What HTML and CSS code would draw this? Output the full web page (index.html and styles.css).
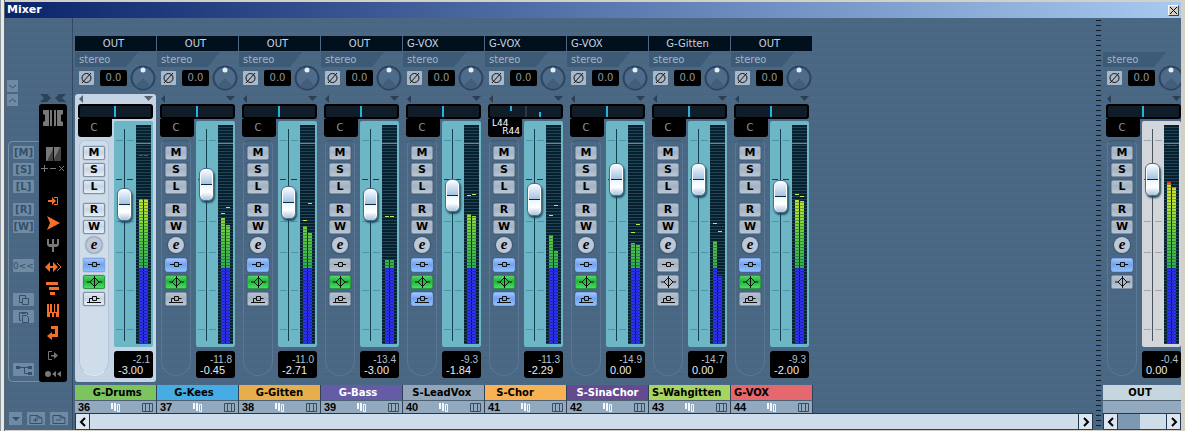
FILE: index.html
```html
<!DOCTYPE html>
<html lang="en">
<head>
<meta charset="utf-8">
<title>Mixer</title>
<link rel="stylesheet" href="styles.css">
</head>
<body>
<svg class="defs" aria-hidden="true">
  <symbol id="phase" viewBox="0 0 15 14"><circle cx="7.500" cy="7" r="4.500"/><path d="M3 12 12 2"/></symbol>
  <symbol id="insert" viewBox="0 0 20 12"><path d="M4 5.500H8M12 5.500H16"/><path d="M8.500 3.500H12.500V7.500H8.500Z"/></symbol>
  <symbol id="eq" viewBox="0 0 20 12"><path d="M3 6H6M15 6H18M10.500 0V12M10.500 1.500 15 6 10.500 10.500 6 6Z"/></symbol>
  <symbol id="send" viewBox="0 0 20 12"><path d="M3 9.500H17M5.500 9.500V5.500H8.500M12.500 5.500H15.500"/><path d="M8.500 3.500H12.500V7.500H8.500Z"/></symbol>
  <symbol id="prev" viewBox="0 0 8 10"><path d="M6 1 2 5 6 9"/></symbol>
  <symbol id="next" viewBox="0 0 8 10"><path d="M2 1 6 5 2 9"/></symbol>
</svg>

<div class="window">
  <header class="titlebar">
    <h1>Mixer</h1>
    <button class="close" aria-label="Close"><svg width="7" height="7" viewBox="0 0 7 7"><path d="M0 0 7 7M7 0 0 7"/></svg></button>
  </header>

  <main class="desk">
    <aside class="panel">
      <div class="panel-top">
        <div class="folds">
          <button aria-label="Fold down"><svg width="9" height="7" viewBox="0 0 9 7"><path d="M1 2 4.500 5 8 2"/></svg></button>
          <button aria-label="Fold up"><svg width="9" height="7" viewBox="0 0 9 7"><path d="M1 5 4.500 2 8 5"/></svg></button>
        </div>
        <svg class="narrow" width="26" height="8" viewBox="0 0 26 8"><path d="M0 0H7L11 4 7 8H0L4 4ZM26 0H19L15 4 19 8H26L22 4Z"/></svg>
      </div>
      <div class="panel-body">
        <div class="globals">
          <button>[M]</button><button>[S]</button><button>[L]</button>
          <button class="gap-before">[R]</button><button>[W]</button>
          <button class="reset">0&lt;&lt;</button>
          <button class="copy" aria-label="Copy"><svg width="14" height="12" viewBox="0 0 14 12"><path d="M5 8.500H2.500V1.500H8.500V4M5.500 4.500H11.500V10.500H5.500Z"/></svg></button>
          <button aria-label="Paste"><svg width="14" height="12" viewBox="0 0 14 12"><path d="M4 9.500H2.500V1.500H10.500V4M4.500 2.500H8.500M5.500 4.500H9.500L11.500 6.500V11.500H5.500Z"/></svg></button>
          <button class="tree" aria-label="Routing"><svg width="18" height="12" viewBox="0 0 18 12"><path d="M4 3.500H13M9.500 3.500V9.500H13"/><path class="solid" d="M1 2H5V5H1ZM13 2H17V5H13ZM13 8H17V11H13Z"/></svg></button>
        </div>
        <div class="views">
          <svg class="view-wide" width="22" height="16" viewBox="0 0 22 16"><path class="grey" d="M1 0H7V16H1V12L3 11V5L1 4ZM8 0H10V16H8ZM12 0H14V16H12ZM15 0H21V4L19 5V11L21 12V16H15Z"/></svg>
          <svg class="view-split" width="24" height="28" viewBox="0 0 24 28"><path class="grey" d="M5 0H12V14H5Z"/><path class="dim" d="M13 0H20V14H13Z"/><path class="grey" d="M13 0H19L13 12Z"/><path class="dim" d="M6 14 12 2V14Z"/><path class="line" d="M0 21.500H7M9 21.500H15M3.500 18V25M18 19 23 24M23 19 18 24"/></svg>
          <svg width="20" height="22" viewBox="0 0 20 22"><path class="hot" d="M5 10H9V7L13 11 9 15V12H5Z"/><path class="hot-line" d="M11 7.500H14.500V14.500H11"/></svg>
          <svg width="20" height="22" viewBox="0 0 20 22"><path class="hot" d="M4 4 17 11 4 18 7 11Z"/></svg>
          <svg width="20" height="22" viewBox="0 0 20 22"><path class="grey" d="M4 5H6V10H9V5H11V10H14V5H16V11L14 13H11V18H9V13H6L4 11Z"/></svg>
          <svg width="20" height="22" viewBox="0 0 20 22"><path class="hot" d="M2 11 7 6V10H10V6L15 11 10 16V12H7V16Z"/><path class="hot-line" d="M14 7 18 11 14 15"/></svg>
          <svg width="20" height="22" viewBox="0 0 20 22"><path class="hot" d="M3 4H15V7H3ZM6 9H16V12H6ZM7 14H12V17H7Z"/></svg>
          <svg width="20" height="22" viewBox="0 0 20 22"><path class="hot" d="M4 4H6V12H7V4H9V12H11V4H12V12H14V4H16V17H13V13H11V17H9V13H7V17H4Z"/></svg>
          <svg width="20" height="22" viewBox="0 0 20 22"><path class="hot" d="M8 4H15V15H9V18L4 14 9 10V12H12V7H8Z"/></svg>
          <svg width="20" height="22" viewBox="0 0 20 22"><path class="line" d="M9 7.500H5.500V15.500H9"/><path class="grey" d="M8 11H11V8L15 11.500 11 15V12.500H8Z"/></svg>
          <svg class="view-transport" width="20" height="16" viewBox="0 0 20 16"><circle class="grey" cx="5" cy="8" r="3"/><path class="grey" d="M9 8 13 5V11ZM14 8 18 5V11Z"/></svg>
        </div>
      </div>
      <div class="presets">
        <button aria-label="Preset menu"><svg width="10" height="6" viewBox="0 0 10 6"><path class="solid" d="M1 1H9L5 5Z"/></svg></button>
        <button class="wide" aria-label="Add preset"><svg width="14" height="10" viewBox="0 0 14 10"><path d="M1 9.500V1.500H8L13 4V9.500ZM8 1V4H13M4 6H9M6.500 4V8"/></svg></button>
        <button class="wide" aria-label="Remove preset"><svg width="14" height="10" viewBox="0 0 14 10"><path d="M1 9.500V1.500H8L13 4V9.500ZM8 1V4H13M4 6H9"/></svg></button>
      </div>
    </aside>

    <section class="rack">
      <div class="strips" id="channels"></div>
      <div class="scroll">
        <button aria-label="Scroll left"><svg width="8" height="10"><use href="#prev"/></svg></button>
        <div class="track"></div>
        <button aria-label="Scroll right"><svg width="8" height="10"><use href="#next"/></svg></button>
      </div>
    </section>

    <div class="divider"></div>

    <section class="rack outputs">
      <div class="strips" id="outputs"></div>
      <div class="scroll">
        <button aria-label="Scroll outputs left"><svg width="8" height="10"><use href="#prev"/></svg></button>
        <div class="track"><div class="thumb"></div></div>
        <button aria-label="Scroll outputs right"><svg width="8" height="10"><use href="#next"/></svg></button>
      </div>
    </section>
  </main>
</div>
<script src="mixer.js"></script>
</body>
</html>
```

FILE: mixer.js
```js
// bars: meter heights, peaks: hold marks measured from the top of the meter,
// on: which of insert / eq / send are lit.
const channels = [
  { n: 36, name: " G-Drums", color: "green", route: "OUT", fader: 120, peak: "-2.1", vol: "-3.00", bars: [144, 144], peaks: [30, 30], hot: true, on: "ie", selected: true },
  { n: 37, name: "G-Kees  ", color: "sky", route: "OUT", fader: 140, peak: "-11.8", vol: "-0.45", bars: [125, 118], peaks: [88, 82], on: "ie" },
  { n: 38, name: "G-Gitten", color: "amber", route: "OUT", fader: 122, peak: "-11.0", vol: "-2.71", bars: [117, 110], peaks: [95, 78], on: "ie" },
  { n: 39, name: "G-Bass  ", color: "violet", route: "OUT", fader: 120, peak: "-13.4", vol: "-3.00", bars: [83, 83], peaks: [91, 91], on: "e" },
  { n: 40, name: "S-LeadVox ", color: "slate", route: "G-VOX", fader: 129, peak: "-9.3", vol: "-1.84", bars: [129, 127], peaks: [70, 69], on: "ies" },
  { n: 41, name: "S-Chor      ", color: "orange", route: "G-VOX", fader: 125, peak: "-11.3", vol: "-2.29", bars: [108, 92], peaks: [90, 80], on: "ies", pan: ["L44", "R44"] },
  { n: 42, name: "S-SinaChor", color: "purple", route: "G-VOX", fader: 145, peak: "-14.9", vol: "0.00", bars: [100, 98], peaks: [107, 99], on: "ies" },
  { n: 43, name: "S-Wahgitten", color: "lime", left: true, route: "G-Gitten", fader: 145, peak: "-14.7", vol: "0.00", bars: [102, 67], peaks: [98, 106], on: "" },
  { n: 44, name: "G-VOX", color: "red", left: true, route: "OUT", fader: 128, peak: "-9.3", vol: "-2.00", bars: [143, 142], peaks: [69, 71], on: "ie" },
];
const outputs = [
  { name: "OUT  ", color: "pale", fader: 145, peak: "-0.4", vol: "0.00", bars: [162, 156], peaks: [20, 20], hot: true, on: "i", output: true },
];

const ticks = `<svg class="ticks" viewBox="0 0 18 212"><path d="M0 11.5H7M11 11.5H18M0 92.5H7M11 92.5H18M0 123.5H7M11 123.5H18M0 161.5H7M11 161.5H18M0 200.5H7M11 200.5H18"/><path class="zero" d="M0 50.5H6M11 50.5H17"/><path class="rail" d="M8.5 0V212"/></svg>`;

const slot = (c, key, icon, label) =>
  `<button class="btn ${c.on.includes(key) ? "lit-" + icon : ""}" aria-label="${label}"><svg width="20" height="12"><use href="#${icon}"/></svg></button>`;

const strip = c => `
<article class="strip ${c.selected ? "selected" : ""} ${c.output ? "output" : ""}">
  <div class="route ${c.route === "G-VOX" ? "left" : ""}">${c.route || ""}</div>
  <div class="format"><span>stereo</span></div>
  <div class="gain">
    <button class="phase" aria-label="Phase"><svg width="15" height="14"><use href="#phase"/></svg></button>
    <span class="trim">0.0</span>
    <svg class="knob" width="26" height="26" viewBox="0 0 26 26"><circle class="ring" cx="13" cy="13" r="11.500"/><path d="M5 21 13 13 21 21Q13 27 5 21Z"/><circle class="dot" cx="13" cy="5" r="2.500"/></svg>
  </div>
  <div class="body">
    <div class="arrows"><svg width="4" height="8" viewBox="0 0 4 8"><path d="M4 0V8L0 4Z"/></svg><svg width="9" height="6" viewBox="0 0 9 6"><path d="M0 0H9L4.5 5Z"/></svg></div>
    <div class="pan ${c.pan ? "dual" : ""}"><i></i><i></i><i></i></div>
    <div class="cols">
      <div class="left-col">
        <div class="pan-text">${c.pan ? `<span>${c.pan[0]}</span><span>${c.pan[1]}</span>` : "C"}</div>
        <div class="pill">
          <button class="btn">M</button><button class="btn">S</button><button class="btn">L</button>
          <button class="btn gap-before">R</button><button class="btn">W</button>
          <button class="edit" aria-label="Edit">e</button>
          ${slot(c, "i", "insert", "Inserts")}${slot(c, "e", "eq", "Equalizer")}${c.output ? "" : slot(c, "s", "send", "Sends")}
        </div>
      </div>
      <div class="right-col">
        <div class="fader">
          <div class="throw">${ticks}<input type="range" min="0" max="179" value="${c.fader}" aria-label="${c.name.trim()} level"></div>
          <div class="meter">
            ${c.bars.map((h, i) => `<div class="lane"><div class="bar" style="height:${h}px"></div><b class="${c.hot ? "hot" : ""}" style="top:${c.peaks[i]}px"></b></div>`).join("")}
          </div>
        </div>
        <div class="readout"><span class="peak">${c.peak}</span><span>${c.vol}</span></div>
      </div>
    </div>
  </div>
  <div class="name ${c.color} ${c.left ? "left" : ""}">${c.name}</div>
  <div class="foot">${c.n ? `<span>${c.n}</span><svg width="10" height="9" viewBox="0 0 10 9"><path class="white" d="M0 0H2V6H0ZM3 0H5V8H3Z"/><path class="white-line" d="M6.500 1.500H8.500V8.500H6.500Z"/></svg><svg width="11" height="9" viewBox="0 0 11 9"><path class="dark-line" d="M.5 .5H10.500V8.500H.5ZM3.500 0V9M7.500 0V9"/></svg>` : ""}</div>
</article>`;

document.getElementById("channels").innerHTML = channels.map(strip).join("");
document.getElementById("outputs").innerHTML = outputs.map(strip).join("");
```

FILE: styles.css
```css
* { box-sizing: border-box; }
body { margin: 0; font: 10px/12px "DejaVu Sans", Verdana, sans-serif; background: #d4d0c8; }
button { margin: 0; padding: 0; border: 0; font: inherit; color: inherit; display: flex; align-items: center; justify-content: center; }
svg { display: block; fill: none; stroke: none; flex: none; }
.defs { position: absolute; width: 0; height: 0; }

.window { min-height: 100vh; display: flex; flex-direction: column; padding: 2px 4px 2px 5px; background: linear-gradient(90deg, #8c98a4 0 1px, #ece9e2 1px 4px, #5a6670 4px 5px, #d4d0c8 5px); }
.titlebar { height: 16px; display: flex; align-items: center; justify-content: space-between; padding: 0 2px; background: linear-gradient(90deg, #0a246a, #a6caf0); }
.titlebar h1 { margin: 0; font-size: 11px; line-height: 14px; color: #fff; }
.close { width: 11px; height: 11px; background: #d4d0c8; border: 1px solid; border-color: #fff #404040 #404040 #fff; }
.close svg { stroke: #000; }

.desk { flex: 1; display: flex; background: repeating-linear-gradient(#4a6784 0 4px, #486580 4px 5px, #4b6986 5px 8px); }

/* left control panel */
.panel { width: 68px; flex: none; border-right: 1px solid #34495f; padding-top: 62px; display: flex; flex-direction: column; }
.panel-top { display: flex; justify-content: space-between; align-items: flex-end; padding: 0 6px 0 2px; height: 24px; }
.folds { display: grid; gap: 2px; align-self: flex-start; }
.folds button { width: 11px; height: 12px; background: #6f8aa3; }
.folds svg, .presets svg, .globals svg { stroke: #34506c; }
.narrow { fill: #2c4258; margin-bottom: 2px; }
.panel-body { display: flex; padding-left: 3px; height: 278px; }
.globals { width: 31px; margin-top: 37px; padding: 4px 0 0 4px; border: 1px solid #7690a8; border-right: 0; border-radius: 5px 0 0 5px; display: flex; flex-direction: column; gap: 4px; }
.globals button { width: 21px; height: 13px; background: #6f8aa3; color: #34506c; font-weight: bold; border-radius: 1px; }
.globals .gap-before { margin-top: 6px; }
.globals .reset { margin-top: 22px; font-weight: normal; font-size: 9px; }
.globals .copy { margin-top: 17px; }
.globals .tree { margin-top: 36px; }
.views { width: 28px; background: #000; border-radius: 3px; display: flex; flex-direction: column; align-items: center; }
.view-wide { margin: 6px 0; }
.view-split { margin: 15px 0; }
.grey { fill: #77787a; }
.dim { fill: #444; }
.line { stroke: #77787a; }
.hot { fill: #f2702a; }
.hot-line { stroke: #f2702a; }
.presets { display: flex; gap: 5px; padding: 30px 4px 0; }
.presets button { width: 13px; height: 13px; background: #6f8aa3; }
.presets .wide { width: 18px; }
.solid { fill: #34506c; stroke: none; }

/* racks */
.rack { flex: 1; min-width: 0; padding: 18px 0 0 2px; display: flex; flex-direction: column; }
.strips { display: flex; flex: 1; overflow: hidden; }
.scroll { display: flex; height: 17px; border-top: 1px solid #22384e; border-bottom: 1px solid #2a3f54; margin-right: 3px; }
.scroll button { width: 15px; background: #dce6f0; border: 1px solid #22384e; border-width: 0 1px; }
.scroll svg { stroke: #000; stroke-width: 2; }
.track { flex: 1; background: #cfdce9; }
.thumb { width: 22px; height: 100%; background: #7d98b2; }
.divider { width: 5px; margin: 2px 2px 0 0; flex: none; background: repeating-linear-gradient(#0f1c2a 0 1px, transparent 1px 5px); }
.outputs { flex: 0 0 78px; padding-left: 0; }
.outputs .scroll { margin-right: 0; }

/* channel strip */
.strip { width: 82px; flex: none; display: flex; flex-direction: column; }
.route { height: 15px; margin-right: 1px; padding-right: 4px; background: #00101c; color: #c8d4e0; text-align: center; line-height: 15px; }
.route.left { text-align: left; padding-left: 4px; }
.output .route { background: none; }
.format { height: 15px; margin-top: 1px; padding-left: 4px; line-height: 15px; color: #a3b5c5; background: #3d5a76; clip-path: polygon(0 0, 63px 0, 51px 100%, 0 100%); }
.gain { height: 26px; display: flex; align-items: center; padding-left: 4px; margin-top: -2px; }
.phase { width: 15px; height: 14px; background: #a9b8c9; border-radius: 1px; }
.phase svg { stroke: #111; }
.trim { width: 27px; height: 16px; margin: 0 3px 0 6px; background: #000; border-radius: 2px; color: #8b97a3; text-align: center; line-height: 16px; }
.knob { fill: #415e7a; }
.knob .ring { fill: #4e6c89; stroke: #2d4560; stroke-width: 2; }
.knob .dot { fill: #e2edf8; }

.body { height: 288px; margin: 3px 1px 3px 0; padding: 1px 3px 4px; border-radius: 3px; }
.selected .body { background: #c4d4e4; }
.arrows { height: 8px; display: flex; justify-content: space-between; align-items: center; padding-left: 1px; }
.arrows path { fill: #2b3f54; }
.selected .arrows path { fill: #58626e; }
.pan { height: 15px; margin-top: 1px; padding-right: 2px; background: #101c28; border: 2px solid #000; border-radius: 3px; display: flex; justify-content: center; }
.pan i { width: 2px; background: #2ab0dc; }
.pan i:nth-child(1), .pan i:nth-child(3) { display: none; }
.pan.dual { justify-content: space-evenly; padding: 0 8px; }
.pan.dual i { display: block; }
.pan.dual i:nth-child(2) { background: #2c3a48; }
.pan.dual i:nth-child(1) { height: 5px; }
.pan.dual i:nth-child(3) { height: 5px; align-self: flex-end; }
.cols { display: flex; justify-content: space-between; }
.left-col { width: 34px; }
.pan-text { height: 18px; background: #000; border-radius: 0 0 3px 3px; color: #8b97a3; text-align: center; line-height: 18px; padding-right: 2px; }
.pan-text span { display: block; height: 8px; line-height: 8px; font-size: 9px; color: #fff; text-align: right; }
.pan-text span:first-child { text-align: left; padding-left: 4px; }
.pill { width: 30px; height: 236px; margin: 3px 0 0 1px; padding-top: 5px; border: 1px solid #5a7793; border-top-color: #3c5772; border-radius: 6px 6px 15px 15px; display: flex; flex-direction: column; align-items: center; gap: 3px; }
.selected .pill { background: #cfdcea; border-color: #b4c5d8 #b4c5d8 #dfe9f4; }
.btn { width: 22px; height: 14px; flex: none; background: linear-gradient(#b4c1d0, #a4b2c3 45%, #bac7d5); border: 1px solid #8091a4; border-radius: 2px; box-shadow: 0 0 1px #1e3248; font-size: 11px; font-weight: bold; line-height: 12px; color: #000; }
.btn svg { stroke: #111; }
.selected .btn { background-image: linear-gradient(#e2eaf4, #c8d5e4 45%, #e6eef8); }
.btn.lit-insert, .btn.lit-send { background: linear-gradient(#a5c6fa, #6ea2f0 45%, #8fc0ff); border-color: #80a8e8; }
.btn.lit-eq { background: linear-gradient(#58d468, #20b43c 45%, #46e060); border-color: #2a9a40; }
.btn.gap-before { margin-top: 6px; }
.edit { width: 16px; height: 16px; flex: none; margin-bottom: 2px; border-radius: 50%; background: #bcc8d6; color: #000; font: italic bold 15px/12px "Liberation Serif", serif; box-shadow: 0 0 2px #1e3248; padding-bottom: 3px; }
.right-col { width: 39px; padding-top: 2px; }
.fader { height: 226px; padding: 4px 2px 3px; display: flex; justify-content: space-between; background: #6cb6c6; border-radius: 2px; }
.output .fader { background: #d2d6da; }
.throw { position: relative; width: 18px; height: 212px; margin-top: 4px; }
.ticks { width: 18px; height: 212px; stroke: #4c94a6; }
.ticks .zero, .ticks .rail { stroke: #12404e; }
.output .ticks { stroke: #a2a8ae; }
.output .zero, .output .rail { stroke: #4c5258; }
.throw input { position: absolute; top: 0; left: 1px; width: 15px; height: 212px; margin: 0; writing-mode: vertical-lr; direction: rtl; appearance: none; background: none; }
.throw input::-webkit-slider-thumb { appearance: none; width: 15px; height: 33px; border-radius: 6px; border: 1px solid #4e6a90; background: linear-gradient(#fff 0, #d6e6f6 20%, #a8c4e0 47%, #10283c 47%, #10283c 51%, #e8f6fe 51%, #fff 75%, #a8c2da 100%); box-shadow: inset 1px 0 #fff, inset -1px 0 #fff, 1px 2px 2px #1e4c5c; }
.meter { width: 15px; height: 219px; padding: 0 2px 1px 3px; display: flex; gap: 1px; background: linear-gradient(transparent 18px, #74828c 18px 19px, transparent 19px), repeating-linear-gradient(#08202e 0 2px, #1f4658 2px 3px); }
.lane { position: relative; width: 4px; display: flex; align-items: flex-end; }
.lane .bar { width: 4px; background: repeating-linear-gradient(to top, transparent 0 2px, rgba(0, 20, 50, .35) 2px 3px), linear-gradient(to top, #2c30f0 75px, #2fae4e 75px, #62cc40 110px, #b8e42c 140px, #d4dc28 158px, #e03020 160px) bottom / 100% 218px; }
.lane b { position: absolute; left: 0; width: 4px; height: 1px; background: #c0e850; }
.lane b.hot { background: #c02830; }
.readout { height: 27px; margin-top: 4px; padding: 3px 3px 0 4px; background: #000; border-radius: 3px; color: #e4ebf2; font: 11px/11px "Liberation Sans", Arial, sans-serif; }
.readout span { display: block; }
.readout .peak { font-size: 10px; text-align: right; color: #b6c2ce; }

.name { height: 16px; border-right: 1px solid #2c4258; border-bottom: 1px solid #4c6074; color: #000; font-weight: bold; line-height: 16px; text-align: center; white-space: pre; }
.name.left { text-align: left; padding-left: 3px; }
.green { background: #7cc45e; }
.sky { background: #46ace4; }
.amber { background: #e6ae4c; }
.violet { background: #655ca8; color: #fff; }
.slate { background: #93a5b8; }
.orange { background: #f8b254; }
.purple { background: #654a90; color: #fff; }
.lime { background: #a8d460; }
.red { background: #e4686e; }
.pale { background: #c6d6de; }
.foot { height: 12px; padding: 0 3px; background: #93a9bd; border-right: 1px solid #2c4258; display: flex; justify-content: space-between; align-items: center; font: bold 11px/12px "Liberation Sans", Arial, sans-serif; }
.foot .white { fill: #f4f8fc; }
.foot .white-line { stroke: #f4f8fc; }
.foot .dark-line { stroke: #3a4c5e; }
```
